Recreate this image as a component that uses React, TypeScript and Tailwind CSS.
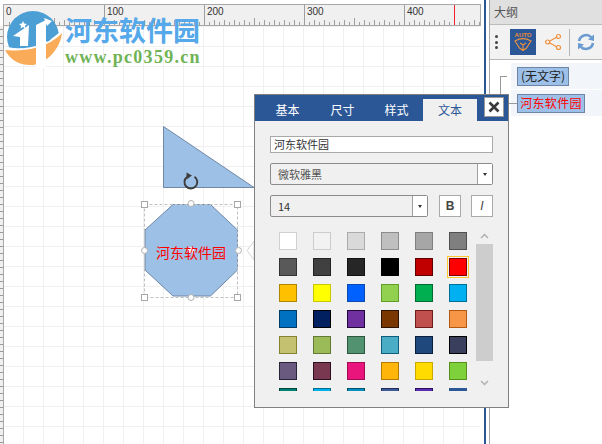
import React from "react";

const cjk = "font-['Noto_Sans_CJK_SC','Liberation_Sans',sans-serif]";

function RulerTicks() {
  const t: React.ReactElement[] = [];
  for (let x = 0; x < 476; x += 5) {
    if (x % 100 === 0) continue;
    const h = x % 50 === 0 ? 7 : x % 10 === 0 ? 5 : 3;
    t.push(<line key={x} x1={x + 0.5} x2={x + 0.5} y1={20 - h} y2={20} stroke="#9e9e9e" strokeWidth="1" />);
  }
  return (
    <svg width="476" height="20" className="absolute left-0 top-0">
      {t}
    </svg>
  );
}

function LeftTicks() {
  const t: React.ReactElement[] = [];
  for (let y = 3; y < 420; y += 7) {
    t.push(<line key={y} x1="0" x2="3" y1={y + 0.5} y2={y + 0.5} stroke="#9a9a9a" strokeWidth="1" />);
  }
  return (
    <svg width="3" height="420" className="block">
      {t}
    </svg>
  );
}

function Logo() {
  return (
    <svg width="70" height="70" viewBox="0 0 70 70" className="absolute left-0 top-0">
      <defs>
        <clipPath id="logoDisc">
          <path d="M0 0 H70 V28 H64 C44 50 14 52 0 44 Z" />
        </clipPath>
      </defs>
      <circle cx="33" cy="37" r="26" fill="#4b9fd5" clipPath="url(#logoDisc)" />
      <path d="M5 50 C16 51 44 52 62 33 C60 50 46 63 33 65 C20 66 10 60 5 50 Z" fill="#f9ab57" />
      <path d="M13 36 L29 25 L28 46 L20 46 L20 37 Z" fill="#fff" />
      <path d="M36 25 L46 20 L46 68 L36 68 Z" fill="#fff" />
      <path d="M47 24 C56 26 56 38 47 42 Z" fill="#4b9fd5" />
      <path d="M44 18 L52 21 L47 26 Z" fill="#fff" />
      <path d="M23 21 l1.2 2.6 2.8.3-2.1 1.8.6 2.7-2.5-1.4-2.5 1.4.6-2.7-2.1-1.8 2.8-.3z" fill="#fff" />
    </svg>
  );
}

function Diagram() {
  return (
    <svg viewBox="130 120 130 190" style={{ width: 130, height: 190 }} className="absolute left-[130px] top-[120px] overflow-visible">
      <polygon points="163.5,126.5 163.5,187.5 254,187.5" fill="#9dc0e6" stroke="#7189a6" strokeWidth="1" />
      <polygon points="173,204.5 210.5,204.5 237.5,230 237.5,270 210.5,296 173,296 145,270 145,230" fill="#9dc0e6" stroke="#7189a6" strokeWidth="1" />
      <path d="M194.5 176.8 A6.4 6.4 0 1 1 187 177" fill="none" stroke="#3d3d3d" strokeWidth="1.9" />
      <path d="M186.5 172.5 L192 175.5 L186.5 179.5 Z" fill="#3d3d3d" />
      <rect x="144.5" y="204.5" width="93" height="93" fill="none" stroke="#c0c0c0" strokeDasharray="3 2" />
      {[[144.5, 204.5], [237.5, 204.5], [144.5, 297.5], [237.5, 297.5]].map(([x, y]) => (
        <rect key={`${x}-${y}`} x={x - 3} y={y - 3} width="6" height="6" fill="#fff" stroke="#a8a8a8" />
      ))}
      {[[191, 203.5], [144.5, 250.5], [238.5, 250.5], [191, 297.5]].map(([x, y]) => (
        <circle key={`${x}-${y}`} cx={x} cy={y} r="3" fill="#fff" stroke="#b0b0b0" />
      ))}
      <circle cx="191" cy="250" r="3" fill="#fff" opacity="0.85" />
      <polygon points="254,241 247,250.5 254,260" fill="#fff" stroke="#d4d4d4" />
    </svg>
  );
}

const swatches: [string, string][][] = [
  [["#ffffff", "#d0d0d0"], ["#f2f2f2", "#cccccc"], ["#d9d9d9", "#ababab"], ["#bfbfbf", "#8c8c8c"], ["#a6a6a6", "#7f7f7f"], ["#7f7f7f", "#505050"]],
  [["#595959", "#333333"], ["#404040", "#222222"], ["#262626", "#111111"], ["#000000", "#000000"], ["#c00000", "#5e0000"], ["#ff0000", "#800000"]],
  [["#ffc000", "#b08500"], ["#ffff00", "#c8c800"], ["#0061ff", "#0b4bb0"], ["#92d050", "#5f9e27"], ["#00b050", "#006b30"], ["#00b0f0", "#006f98"]],
  [["#0070c0", "#003a66"], ["#002060", "#000000"], ["#7030a0", "#220838"], ["#7a3700", "#2c1400"], ["#c0504d", "#6f1b18"], ["#f79646", "#b3590f"]],
  [["#c4c270", "#85832e"], ["#9bbb59", "#647a33"], ["#539270", "#2b5740"], ["#4bacc6", "#0f5e7c"], ["#1f497d", "#0a1f3c"], ["#393f5d", "#000000"]],
  [["#6a5a80", "#2a2238"], ["#7a3850", "#2c1020"], ["#e9157c", "#a00c50"], ["#ffb50a", "#b57a00"], ["#ffdb00", "#c8a800"], ["#7fd13b", "#55901f"]],
  [["#008273", "#00443c"], ["#00b0e8", "#006d90"], ["#0090c0", "#005070"], ["#3f5a9a", "#1f2f58"], ["#5b2cb0", "#2a1060"], ["#2b5797", "#2b5797"]],
];

function Popover() {
  return (
    <div className={`absolute left-[254px] top-[94px] h-[314px] w-[255px] border border-[#808080] bg-[#f0f0f0] ${cjk}`}>
      <div className="relative flex h-[26px] items-end bg-[#2b5797] pl-[5px] text-[12px] leading-[22px] text-white">
        <div className="h-[22px] w-[55px] text-center">基本</div>
        <div className="h-[22px] w-[55px] text-center">尺寸</div>
        <div className="h-[22px] w-[53px] text-center">样式</div>
        <div className="h-[22px] w-[54px] bg-[#f0f0f0] text-center text-[#2b5797]">文本</div>
        <div className="absolute left-[229px] top-[2px] flex h-[20px] w-[20px] items-center justify-center border border-[#9a9a9a] bg-white">
          <svg width="12" height="12" viewBox="0 0 12 12">
            <path d="M1.5 1.5 L10.5 10.5 M10.5 1.5 L1.5 10.5" stroke="#3a3a3a" strokeWidth="2.6" />
          </svg>
        </div>
      </div>
      <div className="flex flex-col px-[15px] pt-[15px]">
        <div className="flex h-[17px] w-[223px] items-center border border-[#a9a9a9] bg-white pl-[3px] text-[11px] text-[#333]">河东软件园</div>
        <div className="mt-[10px] flex h-[22px] w-[223px] rounded-[2px] border border-[#8c8c8c]">
          <div className="flex flex-1 items-center pl-[7px] text-[11px] text-[#555]">微软雅黑</div>
          <div className="flex w-[15px] items-center justify-center border-l border-[#a0a0a0] bg-white pt-[1px]">
            <span className="h-0 w-0 border-x-[2px] border-t-[3px] border-x-transparent border-t-[#333]" />
          </div>
        </div>
        <div className="mt-[10px] flex h-[22px] w-[223px] items-stretch">
          <div className="flex w-[158px] rounded-[2px] border border-[#8c8c8c]">
            <div className="flex flex-1 items-center pl-[7px] text-[11px] text-[#333]">14</div>
            <div className="flex w-[15px] items-center justify-center border-l border-[#a0a0a0] bg-white">
              <span className="h-0 w-0 border-x-[2px] border-t-[3px] border-x-transparent border-t-[#333]" />
            </div>
          </div>
          <div className="ml-[11px] flex w-[22px] items-center justify-center border border-[#a9a9a9] bg-white font-['Liberation_Sans',sans-serif] text-[12px] font-bold text-[#444]">B</div>
          <div className="ml-[10px] flex w-[22px] items-center justify-center border border-[#a9a9a9] bg-white font-['Liberation_Sans',sans-serif] text-[12px] italic text-[#444]">I</div>
        </div>
        <div className="mt-[15px] flex h-[159px] w-[223px]">
          <div className="h-[159px] w-[206px] overflow-hidden pl-[9px]">
            <div className="flex flex-col gap-[8px]">
              {swatches.map((row, r) => (
                <div key={r} className="flex gap-[16px]">
                  {row.map(([bg, bd], c) => (
                    <div
                      key={c}
                      className={`h-[18px] w-[18px] shrink-0 border ${r === 1 && c === 5 ? "outline-1 outline-offset-1 outline-[#ffc830]" : ""}`}
                      style={{ backgroundColor: bg, borderColor: bd }}
                    />
                  ))}
                </div>
              ))}
            </div>
          </div>
          <div className="flex w-[17px] flex-col items-center">
            <div className="flex h-[12px] items-start pt-[1px]">
              <svg width="9" height="6" viewBox="0 0 9 6"><path d="M1 5 L4.5 1.5 L8 5" fill="none" stroke="#b0b0b0" strokeWidth="1.5" /></svg>
            </div>
            <div className="h-[117px] w-[17px] bg-[#cdcdcd]" />
            <div className="flex h-[25px] items-end">
              <svg width="9" height="6" viewBox="0 0 9 6"><path d="M1 1 L4.5 4.5 L8 1" fill="none" stroke="#b0b0b0" strokeWidth="1.5" /></svg>
            </div>
          </div>
        </div>
      </div>
    </div>
  );
}

function OutlinePanel() {
  return (
    <div className={`flex w-[113px] flex-col border-l border-[#a8a8a8] ${cjk}`}>
      <div className="flex h-[25px] items-center border-b border-[#bdbdbd] bg-[#e0e0e0] pl-[4px] text-[12px] text-[#555]">大纲</div>
      <div className="flex h-[35px] items-center border-b border-[#b8b8b8] bg-[#f2f2f2]">
        <div className="ml-[5px] flex flex-col gap-[2.5px]">
          <span className="h-[3px] w-[3px] rounded-full bg-[#444]" />
          <span className="h-[3px] w-[3px] rounded-full bg-[#444]" />
          <span className="h-[3px] w-[3px] rounded-full bg-[#444]" />
        </div>
        <div className="ml-[12px] flex h-[26px] w-[26px] flex-col items-center bg-[#2b5797] pt-[3px]">
          <span className="font-['Liberation_Sans',sans-serif] text-[6px] font-bold leading-[6px] text-[#e98b3a]">AUTO</span>
          <svg width="18" height="14" viewBox="0 0 18 14">
            <path d="M1 3 C6 0 12 0 17 3 L12.5 10 L9 12.5 L5.5 10 Z M9 12.5 L9 7 M6 5 L9 7 L12 5" fill="none" stroke="#f0913c" strokeWidth="1.1" />
          </svg>
        </div>
        <svg width="18" height="18" viewBox="0 0 18 18" className="ml-[8px]">
          <path d="M4 9 L14 3.5 M4 9 L14 14.5" stroke="#f0913c" strokeWidth="1.2" />
          <circle cx="3.6" cy="9" r="2" fill="#f2f2f2" stroke="#f0913c" strokeWidth="1.2" />
          <circle cx="14.5" cy="3.5" r="2" fill="#f2f2f2" stroke="#f0913c" strokeWidth="1.2" />
          <circle cx="14.5" cy="14.5" r="2" fill="#f2f2f2" stroke="#f0913c" strokeWidth="1.2" />
        </svg>
        <div className="ml-[7px] h-[27px] w-px bg-[#b5b5b5]" />
        <svg width="18" height="18" viewBox="0 0 18 18" className="ml-[7px]">
          <path d="M2 8 A7.2 7.2 0 0 1 14.2 4.2" fill="none" stroke="#6a9bd0" strokeWidth="2.6" />
          <path d="M16 10 A7.2 7.2 0 0 1 3.8 13.8" fill="none" stroke="#6a9bd0" strokeWidth="2.6" />
          <path d="M17 1.5 L17 8 L11 6.5 Z" fill="#6a9bd0" />
          <path d="M1 16.5 L1 10 L7 11.5 Z" fill="#6a9bd0" />
        </svg>
      </div>
      <div className="relative flex flex-1 flex-col items-stretch pl-[21px] pt-[3px]">
        <div className="absolute left-[10px] top-[16px] h-[28px] w-[7px] border-l border-t border-[#999]" />
        <div className="flex h-[26px] items-center bg-[#f2f5fa] pl-[6px]">
          <div className="flex h-[19px] w-[52px] items-center justify-center border border-[#6e85a8] bg-[#9dc0e8] text-[12px] leading-none text-[#222]">(无文字)</div>
        </div>
        <div className="mt-[1px] flex h-[26px] items-center bg-[#f2f5fa] pl-[6px]">
          <div className="flex h-[19px] w-[68px] items-center justify-center border border-[#6e85a8] bg-[#9dc0e8] text-[12px] leading-none tracking-[0.3px] text-[#ff0000]">河东软件园</div>
        </div>
      </div>
    </div>
  );
}

export default function App() {
  return (
    <div className="relative flex h-[444px] w-[602px] overflow-hidden bg-white">
      <div className="flex w-[484px] flex-col pt-[4px]">
        <div className="ml-[3px] flex h-[22px] w-[478px] border border-[#a8a8a8] bg-[#f0f0f0]">
          <div className="relative flex flex-1 overflow-hidden font-['Liberation_Sans',sans-serif] text-[10px] leading-[14px] text-[#333]">
            <RulerTicks />
            <div className="h-full w-[100px] shrink-0 pl-[2px]">0</div>
            <div className="h-full w-[100px] shrink-0 border-l border-[#9e9e9e] pl-[2px]">100</div>
            <div className="h-full w-[100px] shrink-0 border-l border-[#9e9e9e] pl-[2px]">200</div>
            <div className="h-full w-[100px] shrink-0 border-l border-[#9e9e9e] pl-[2px]">300</div>
            <div className="h-full w-[76px] shrink-0 border-l border-[#9e9e9e] pl-[2px]">400</div>
            <div className="absolute left-[450px] top-0 h-full w-px bg-[#f02030]" />
          </div>
        </div>
        <div className="flex flex-1 overflow-hidden">
          <div className="w-[4px] shrink-0 border-r border-[#a8a8a8] bg-[#f0f0f0]"><LeftTicks /></div>
          <div className="h-full w-[476px] bg-[linear-gradient(to_right,#f0f0f0_1px,transparent_1px),linear-gradient(to_bottom,#f0f0f0_1px,transparent_1px)] bg-[size:20px_20px] bg-[position:-1px_0px]" />
          <div className="h-full w-[4px]" />
        </div>
      </div>
      <div className="w-[2px] shrink-0 bg-[#2b5797]" />
      <div className="w-[3px] shrink-0" />
      <OutlinePanel />

      <Logo />
      <div className={`absolute left-[65px] top-[8px] text-[27px] font-bold leading-[44px] text-[#55a8ea] ${cjk}`}>河东软件园</div>
      <div className="absolute left-[65px] top-[47px] font-['Liberation_Serif',serif] text-[18px] font-bold leading-[20px] tracking-[1.3px] text-[#6fb356]">www.pc0359.cn</div>

      <Diagram />
      <div className={`absolute left-[156px] top-[242px] text-[14px] leading-[20px] text-[#ff0000] ${cjk}`}>河东软件园</div>
      <div className="absolute left-[509px] top-[103px] h-px w-[8px] bg-[#999]" />
      <Popover />
    </div>
  );
}
